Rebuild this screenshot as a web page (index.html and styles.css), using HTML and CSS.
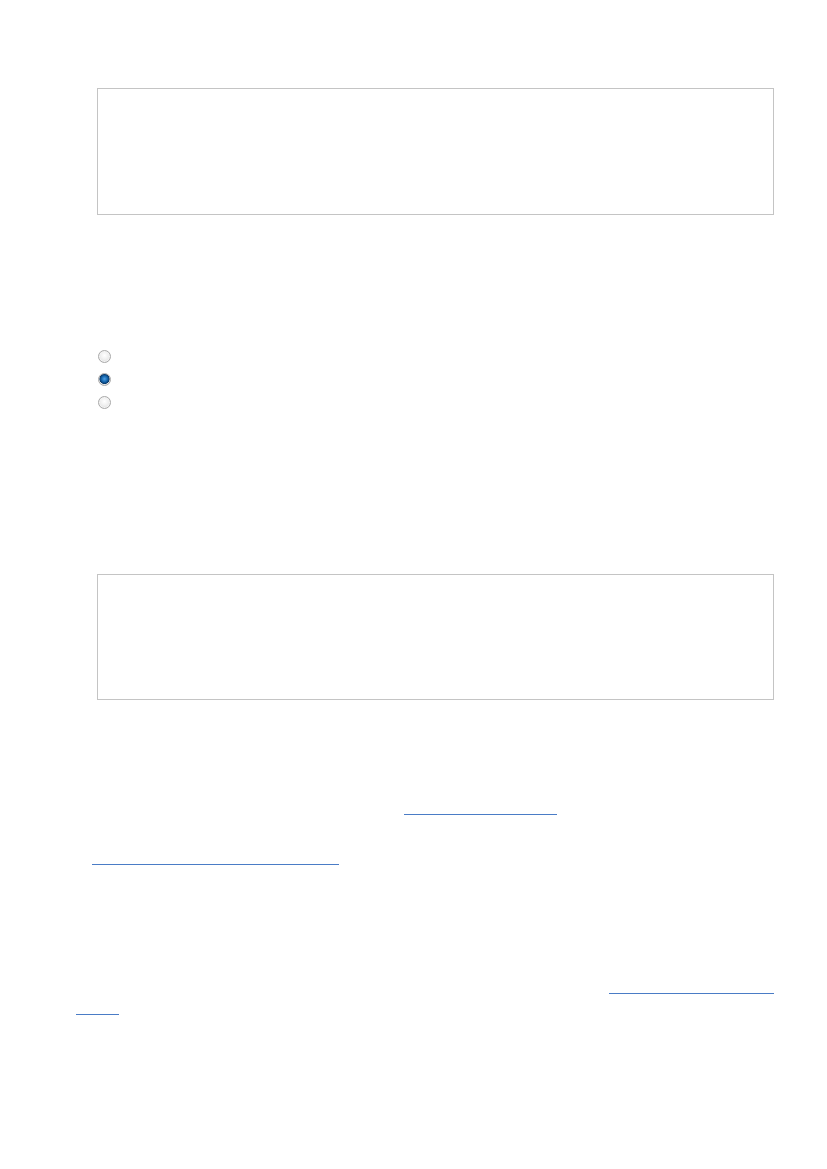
FILE: index.html
```html
<!DOCTYPE html>
<html lang="en">
<head>
<meta charset="utf-8">
<title>Form</title>
<link rel="stylesheet" href="styles.css">
</head>
<body>
<div class="page">
  <div class="box"></div>
  <div class="radios">
    <div class="radio-row"><span class="radio"></span><span class="label">Option one</span></div>
    <div class="radio-row"><span class="radio checked"></span><span class="label">Option two</span></div>
    <div class="radio-row"><span class="radio"></span><span class="label">Option three</span></div>
  </div>
  <div class="box box2"></div>
  <div class="row r1"><a class="lnk l1" href="#">More information</a></div>
  <div class="row r2"><a class="lnk l2" href="#">Read the full description</a></div>
  <div class="row r3"><a class="lnk l3" href="#">See the help page</a></div>
  <div class="row r4"><a class="lnk l4" href="#">here</a></div>
</div>
</body>
</html>
```
FILE: styles.css
```css
html, body {
  margin: 0;
  padding: 0;
  background: #ffffff;
}
body {
  font-family: "Liberation Sans", Arial, sans-serif;
  font-size: 13px;
  color: #ffffff;
}
.page {
  width: 698px;
  padding: 0 53px 0 76px;
}
.box {
  margin: 88px 0 0 21px;
  height: 125px;
  border: 1px solid #c4c4c4;
  background: #ffffff;
}
.box2 {
  margin-top: 165px;
  height: 124px;
}
.radios {
  margin: 135px 0 0 22px;
  display: flex;
  flex-direction: column;
  gap: 10px;
}
.radio-row {
  display: flex;
  align-items: center;
  gap: 8px;
  height: 13px;
}
.radio {
  width: 11px;
  height: 11px;
  border-radius: 50%;
  border: 1px solid #a9a9a9;
  background: radial-gradient(circle at 50% 40%, #ffffff 0%, #f0f0f0 45%, #d2d2d2 100%);
  box-shadow: inset 0 0 0 1px #f4f4f4;
}
.radio.checked {
  background: radial-gradient(circle at 50% 45%, #4fa0e4 0%, #1668b0 35%, #0b3b6c 58%, #e6e6e6 66%, #cfcfcf 100%);
  box-shadow: none;
}
.label {
  font-size: 12px;
  color: #ffffff;
}
.row {
  height: 15px;
}
.r1 { margin: 100px 0 0 328px; }
.r2 { margin: 35px 0 0 16px; }
.r3 { margin: 114px 0 0 533px; }
.r4 { margin: 6px 0 0 0; }
.lnk {
  display: inline-block;
  height: 14px;
  overflow: hidden;
  white-space: nowrap;
  vertical-align: top;
  color: #ffffff;
  text-decoration: none;
  border-bottom: 1px solid #4a7cc6;
  font-size: 12px;
  line-height: 14px;
}
.l1 { width: 153px; }
.l2 { width: 247px; }
.l3 { width: 165px; }
.l4 { width: 43px; }
```
